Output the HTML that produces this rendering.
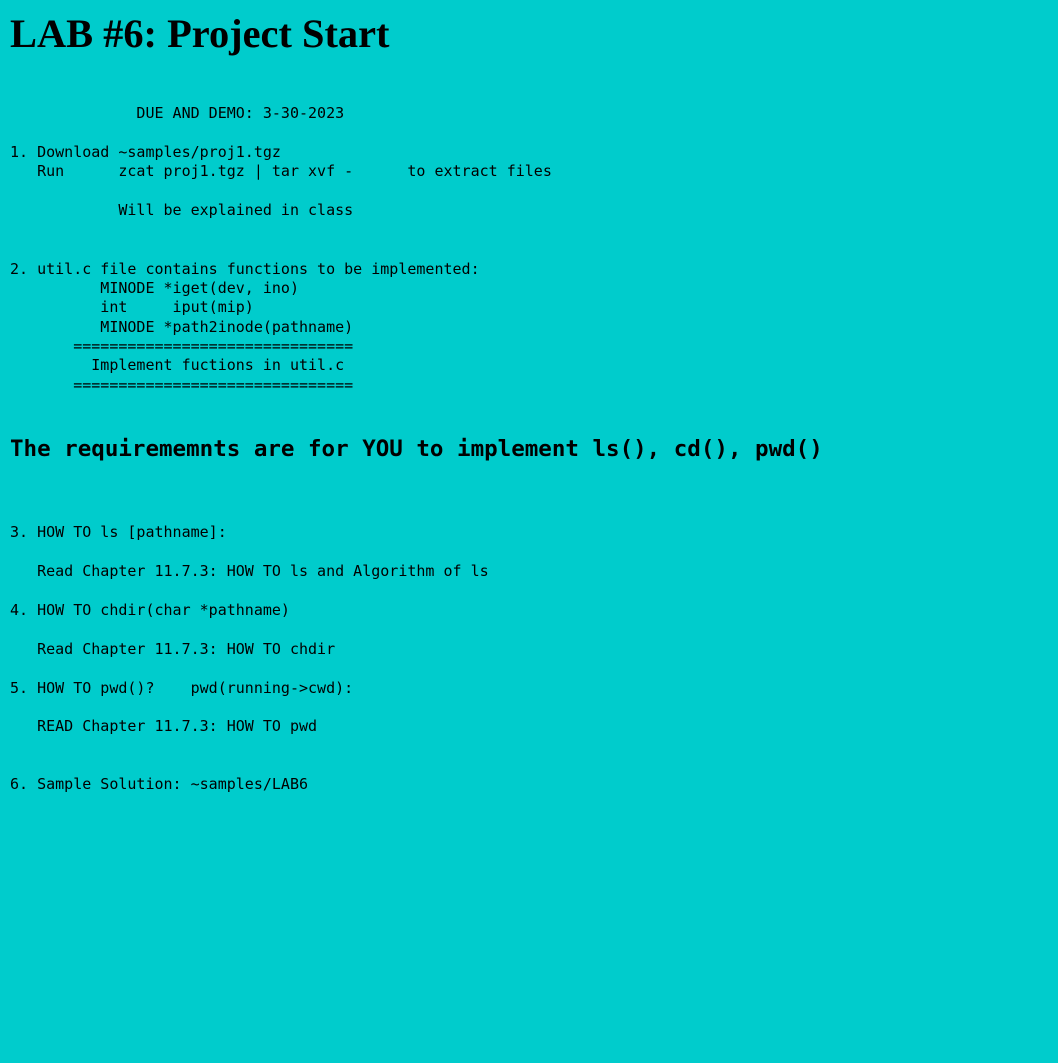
<!DOCTYPE html>
<html><head><style>
html,body{margin:0;padding:0;background:#00cccc;width:1058px;height:1063px;overflow:hidden}
h1{position:absolute;left:10px;top:9px;margin:0;font:bold 40.4px "Liberation Serif",serif;color:#000;line-height:50px;white-space:nowrap}
.l{position:absolute;left:10px;font:15px "DejaVu Sans Mono",monospace;line-height:19px;white-space:pre;color:#000}
.b{position:absolute;left:10px;font:bold 22.5px "DejaVu Sans Mono",monospace;line-height:28px;white-space:pre;color:#000}
</style></head><body>
<h1>LAB #6: Project Start</h1>
<div class="l" style="top:104px">              DUE AND DEMO: 3-30-2023</div>
<div class="l" style="top:143px">1. Download ~samples/proj1.tgz</div>
<div class="l" style="top:162px">   Run      zcat proj1.tgz | tar xvf -      to extract files</div>
<div class="l" style="top:201px">            Will be explained in class</div>
<div class="l" style="top:260px">2. util.c file contains functions to be implemented:</div>
<div class="l" style="top:279px">          MINODE *iget(dev, ino)</div>
<div class="l" style="top:298px">          int     iput(mip)</div>
<div class="l" style="top:318px">          MINODE *path2inode(pathname)</div>
<div class="l" style="top:337px">       ===============================</div>
<div class="l" style="top:356px">         Implement fuctions in util.c</div>
<div class="l" style="top:376px">       ===============================</div>
<div class="b" style="top:435px">The requirememnts are for YOU to implement ls(), cd(), pwd()</div>
<div class="l" style="top:523px">3. HOW TO ls [pathname]:</div>
<div class="l" style="top:562px">   Read Chapter 11.7.3: HOW TO ls and Algorithm of ls</div>
<div class="l" style="top:601px">4. HOW TO chdir(char *pathname)</div>
<div class="l" style="top:640px">   Read Chapter 11.7.3: HOW TO chdir</div>
<div class="l" style="top:679px">5. HOW TO pwd()?    pwd(running-&gt;cwd):</div>
<div class="l" style="top:717px">   READ Chapter 11.7.3: HOW TO pwd</div>
<div class="l" style="top:775px">6. Sample Solution: ~samples/LAB6</div>
</body></html>
